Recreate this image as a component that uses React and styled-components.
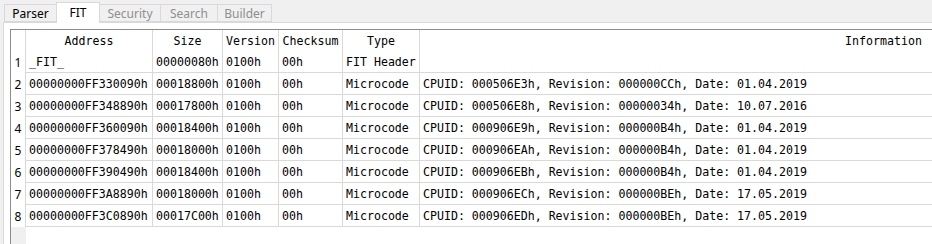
import styled, { createGlobalStyle } from "styled-components";

const GlobalStyle = createGlobalStyle`
  html, body {
    margin: 0;
    padding: 0;
    overflow: hidden;
    background: #f0f0f0;
  }
`;

const columns = [
  { key: "address", title: "Address", width: 127 },
  { key: "size", title: "Size", width: 70 },
  { key: "version", title: "Version", width: 56 },
  { key: "checksum", title: "Checksum", width: 64 },
  { key: "type", title: "Type", width: 77 },
  { key: "info", title: "Information", width: 928 },
];

const rows = [
  ["_FIT_", "00000080h", "0100h", "00h", "FIT Header", ""],
  ["00000000FF330090h", "00018800h", "0100h", "00h", "Microcode", "CPUID: 000506E3h, Revision: 000000CCh, Date: 01.04.2019"],
  ["00000000FF348890h", "00017800h", "0100h", "00h", "Microcode", "CPUID: 000506E8h, Revision: 00000034h, Date: 10.07.2016"],
  ["00000000FF360090h", "00018400h", "0100h", "00h", "Microcode", "CPUID: 000906E9h, Revision: 000000B4h, Date: 01.04.2019"],
  ["00000000FF378490h", "00018000h", "0100h", "00h", "Microcode", "CPUID: 000906EAh, Revision: 000000B4h, Date: 01.04.2019"],
  ["00000000FF390490h", "00018400h", "0100h", "00h", "Microcode", "CPUID: 000906EBh, Revision: 000000B4h, Date: 01.04.2019"],
  ["00000000FF3A8890h", "00018000h", "0100h", "00h", "Microcode", "CPUID: 000906ECh, Revision: 000000BEh, Date: 17.05.2019"],
  ["00000000FF3C0890h", "00017C00h", "0100h", "00h", "Microcode", "CPUID: 000906EDh, Revision: 000000BEh, Date: 17.05.2019"],
];

const tabs = [
  { label: "Parser", width: 53 },
  { label: "FIT", width: 44, selected: true },
  { label: "Security", width: 62, disabled: true },
  { label: "Search", width: 58, disabled: true },
  { label: "Builder", width: 55, disabled: true },
];

const gridTemplate = columns.map((c) => `${c.width}px`).join(" ");

const Page = styled.div`
  height: 100vh;
  box-sizing: border-box;
  padding: 2px 0 0 3px;
  display: flex;
  flex-direction: column;
  font-family: "Segoe UI", "Noto Sans", "Open Sans", sans-serif;
`;

const TabBar = styled.div`
  display: flex;
  align-items: flex-end;
  height: 20px;
  padding-left: 1px;
  position: relative;
  z-index: 1;
`;

const Tab = styled.div`
  box-sizing: border-box;
  width: ${(p) => p.width}px;
  height: ${(p) => (p.selected ? 21 : 18)}px;
  margin-bottom: ${(p) => (p.selected ? -1 : 0)}px;
  margin-left: -1px;
  &:first-child {
    margin-left: 0;
  }
  border: 1px solid #d9d9d9;
  border-bottom: ${(p) => (p.selected ? "none" : "1px solid #d9d9d9")};
  background: ${(p) => (p.selected ? "#ffffff" : "#f0f0f0")};
  color: ${(p) => (p.disabled ? "#8f8f8f" : "#000000")};
  font-size: 12px;
  display: flex;
  align-items: center;
  justify-content: center;
  padding-bottom: ${(p) => (p.selected ? 2 : 0)}px;
  position: relative;
  z-index: ${(p) => (p.selected ? 2 : 1)};
`;

const Pane = styled.div`
  flex: 1;
  display: flex;
  background: #ffffff;
  border-top: 1px solid #d9d9d9;
  border-left: 1px solid #d9d9d9;
  padding: 6px 0 0 6px;
  min-height: 0;
`;

const Table = styled.div`
  flex: 1;
  display: flex;
  border-top: 1px solid #8c8c8c;
  border-left: 1px solid #8c8c8c;
  overflow: hidden;
`;

const RowHeaderColumn = styled.div`
  width: 15px;
  flex-shrink: 0;
  background: #f0f0f0;
  display: flex;
  flex-direction: column;
`;

const RowHeaderCell = styled.div`
  box-sizing: border-box;
  height: ${(p) => (p.corner ? 21 : 22)}px;
  background: #ffffff;
  border-right: 1px solid #d9d9d9;
  font-size: 12px;
  color: #000;
  display: flex;
  align-items: center;
  justify-content: center;
  padding-top: 1px;
`;

const DataArea = styled.div`
  display: flex;
  flex-direction: column;
  font-family: "DejaVu Sans Mono", "Liberation Mono", monospace;
  font-size: 11.6px;
  color: #000;
`;

const Row = styled.div`
  display: grid;
  grid-template-columns: ${gridTemplate};
  height: ${(p) => (p.header ? 21 : 22)}px;
`;

const Cell = styled.div`
  box-sizing: border-box;
  border-right: 1px solid #d9d9d9;
  border-bottom: ${(p) => (p.header ? "none" : "1px solid #d9d9d9")};
  display: flex;
  align-items: center;
  justify-content: ${(p) => (p.header ? "center" : "flex-start")};
  padding: 0 0 0 ${(p) => (p.header ? 0 : 3)}px;
  white-space: nowrap;
  overflow: hidden;
`;

export default function App() {
  return (
    <>
      <GlobalStyle />
      <Page>
        <TabBar>
          {tabs.map((t) => (
            <Tab key={t.label} width={t.width} selected={t.selected} disabled={t.disabled}>
              {t.label}
            </Tab>
          ))}
        </TabBar>
        <Pane>
          <Table>
            <RowHeaderColumn>
              <RowHeaderCell corner />
              {rows.map((_, i) => (
                <RowHeaderCell key={i}>{i + 1}</RowHeaderCell>
              ))}
            </RowHeaderColumn>
            <DataArea>
              <Row header>
                {columns.map((c) => (
                  <Cell header key={c.key}>{c.title}</Cell>
                ))}
              </Row>
              {rows.map((r, i) => (
                <Row key={i}>
                  {r.map((v, j) => (
                    <Cell key={j}>{v}</Cell>
                  ))}
                </Row>
              ))}
            </DataArea>
          </Table>
        </Pane>
      </Page>
    </>
  );
}
